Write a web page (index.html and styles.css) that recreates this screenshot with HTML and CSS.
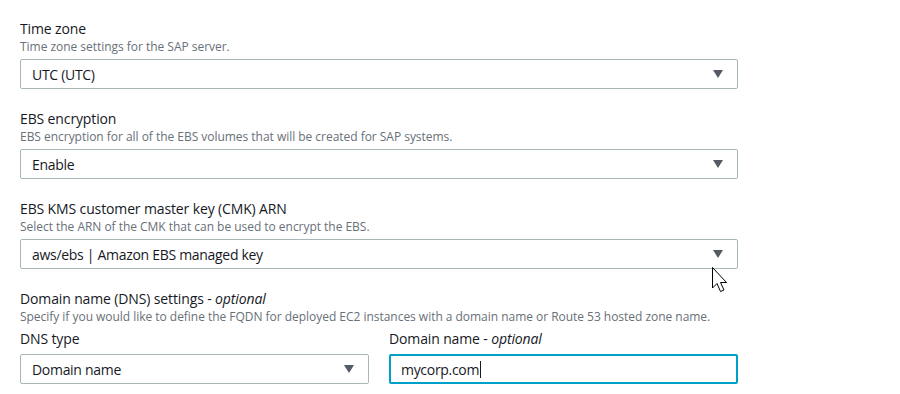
FILE: index.html
```html
<!DOCTYPE html>
<html>
<head>
<meta charset="utf-8">
<link rel="stylesheet" href="styles.css">
</head>
<body>
<div class="form">
  <div class="field">
    <div class="label">Time zone</div>
    <div class="desc">Time zone settings for the SAP server.</div>
    <div class="select"><span>UTC (UTC)</span><span class="caret"></span></div>
  </div>
  <div class="field">
    <div class="label">EBS encryption</div>
    <div class="desc">EBS encryption for all of the EBS volumes that will be created for SAP systems.</div>
    <div class="select"><span>Enable</span><span class="caret"></span></div>
  </div>
  <div class="field">
    <div class="label">EBS KMS customer master key (CMK) ARN</div>
    <div class="desc">Select the ARN of the CMK that can be used to encrypt the EBS.</div>
    <div class="select"><span>aws/ebs | Amazon EBS managed key</span><span class="caret"></span></div>
  </div>
  <div class="field">
    <div class="label">Domain name (DNS) settings - <i>optional</i></div>
    <div class="desc">Specify if you would like to define the FQDN for deployed EC2 instances with a domain name or Route 53 hosted zone name.</div>
    <div class="cols">
      <div class="col">
        <div class="label">DNS type</div>
        <div class="select"><span>Domain name</span><span class="caret"></span></div>
      </div>
      <div class="col">
        <div class="label">Domain name - <i>optional</i></div>
        <div class="input focused"><span>mycorp.com</span><span class="textcursor"></span></div>
      </div>
    </div>
  </div>
</div>
<svg class="pointer" width="20" height="30" viewBox="0 0 20 30">
  <path d="M1.5 1.5 L1.5 22 L6 17.5 L9.5 25.5 L13 24 L9.5 16.5 L15.5 16.5 Z" fill="#fff" stroke="#000" stroke-width="1" stroke-linejoin="miter"/>
</svg>
</body>
</html>
```
FILE: styles.css
```css
html, body {
  margin: 0;
  padding: 0;
  background: #fff;
}
body {
  font-family: "Open Sans", "Noto Sans", sans-serif;
  color: #16191f;
  position: relative;
  width: 900px;
  height: 394px;
  overflow: hidden;
}
.form {
  padding: 19px 0 0 20px;
  width: 718px;
  display: flex;
  flex-direction: column;
  gap: 20px;
}
.field {
  display: flex;
  flex-direction: column;
}
.label {
  font-size: 14px;
  line-height: 20px;
  color: #16191f;
  letter-spacing: -0.13px;
}
.desc {
  font-size: 12px;
  line-height: 16px;
  color: #687078;
  margin-bottom: 4px;
  letter-spacing: -0.03px;
}
.select, .input {
  box-sizing: border-box;
  height: 30px;
  border: 1px solid #aab7b8;
  border-radius: 2px;
  display: flex;
  align-items: center;
  justify-content: space-between;
  padding: 0 14px 0 11px;
  font-size: 14px;
  color: #16191f;
  background: #fff;
  letter-spacing: -0.3px;
}
.caret {
  width: 0;
  height: 0;
  border-left: 5.5px solid transparent;
  border-right: 5.5px solid transparent;
  border-top: 8px solid #545b64;
}
.cols {
  display: flex;
  gap: 20px;
}
.col {
  flex: 1;
  display: flex;
  flex-direction: column;
  gap: 5px;
}
.input.focused {
  border: 2px solid #00a1c9;
  justify-content: flex-start;
  padding-left: 10px;
}
.textcursor {
  display: inline-block;
  width: 1px;
  height: 17px;
  background: #16191f;
  margin-left: 1px;
}
.pointer {
  position: absolute;
  left: 711px;
  top: 266px;
}
```
